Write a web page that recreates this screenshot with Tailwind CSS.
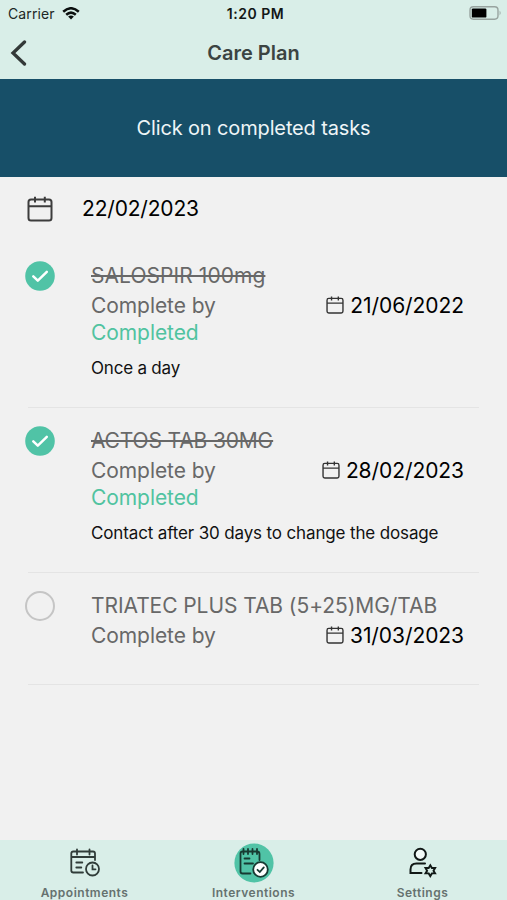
<!DOCTYPE html>
<html lang="en">
<head>
<meta charset="utf-8">
<title>Care Plan</title>
<script src="https://cdn.jsdelivr.net/npm/@tailwindcss/browser@4"></script>
</head>
<body class="bg-[#f1f1f1]">
<svg class="hidden">
  <symbol id="calendar" viewBox="0 0 26 26"><g fill="none" stroke="currentColor" stroke-width="2"><rect x="1.5" y="3.5" width="23" height="21" rx="2.5"/><path d="M1.5 10.3h23M8 .8v5.600M17.800 .8v5.600"/></g></symbol>
  <symbol id="done" viewBox="0 0 30 30"><circle cx="15" cy="15" r="14.8" fill="#50c3a6"/><path d="M8.300 15.300l4.500 4.300 9-8.800" fill="none" stroke="#fff" stroke-width="2.500" stroke-linecap="round" stroke-linejoin="round"/></symbol>
</svg>
<div class="flex h-[900px] w-[507px] flex-col bg-[#f1f1f1] font-['Inter','Liberation_Sans',sans-serif] text-black">
  <header class="h-[79px] shrink-0 bg-[#d9eee8]">
    <div class="grid h-7 grid-cols-3 items-center pl-2 pr-1">
      <div class="flex items-center gap-[7px] text-[14px] leading-7 tracking-[0.1px] text-[#202725]"><span>Carrier</span>
        <svg class="-mt-[2px] h-[13px] w-[18px]" viewBox="0 0 18 13" fill="none" stroke="#0b0f0e" stroke-width="2.500"><path d="M1.200 4.700Q9-2.200 16.800 4.700M4.200 7.800Q9 3.500 13.800 7.800"/><path d="M6.100 9.600Q9 7.200 11.900 9.600L9 12.600z" fill="#0b0f0e" stroke="none"/></svg>
      </div>
      <div class="text-center text-[14px] font-semibold leading-7 tracking-[0.5px] text-[#121716]">1:20 PM</div>
      <div class="-mt-[2px] flex justify-end"><svg class="h-[14px] w-[34px]" viewBox="0 0 34 14"><rect x="1" y=".8" width="28" height="12.400" rx="3.400" fill="none" stroke="#98a4a0" stroke-width="1.400"/><rect x="2.800" y="2.400" width="14.600" height="9.200" rx="1.200" fill="#000"/><path d="M30.600 4.600q2 2.400 0 4.800z" fill="#98a4a0"/></svg></div>
    </div>
    <div class="grid h-[49px] grid-cols-[60px_1fr_60px] items-center">
      <svg class="ml-[10px] h-[26px] w-[18px]" viewBox="0 0 18 26" fill="none" stroke="#333938" stroke-width="3.300" stroke-linecap="round" stroke-linejoin="miter"><path d="M14.500 2L3 13l11.500 11"/></svg>
      <h1 class="text-center text-[20px] font-semibold leading-6 text-[#3b4442]">Care Plan</h1>
    </div>
  </header>
  <div class="flex h-[98px] shrink-0 items-center justify-center bg-[#174f68] text-[20px] tracking-[-0.14px] text-[#eef5f7]">Click on completed tasks</div>
  <main class="flex-1">
    <div class="flex h-[66px] items-center pl-[27px]">
      <svg class="-mt-[2px] h-[26px] w-[26px] text-[#3c3c3c]"><use href="#calendar"/></svg>
      <span class="-mt-[2px] ml-[29px] text-[21px] tracking-[-0.18px]">22/02/2023</span>
    </div>

    <section class="mx-7 h-[165px] border-b border-[#e4e4e4] pt-[17.500px]">
      <div class="flex">
        <svg class="-ml-[3px] h-[30px] w-[30px] shrink-0"><use href="#done"/></svg>
        <div class="ml-9 mr-[15px] flex-1 whitespace-nowrap text-[21px] tracking-[-0.07px] text-[#686868]">
          <h2 class="h-[30px] leading-[30px] tracking-[0.06px]"><span class="line-through decoration-[1.5px]">SALOSPIR 100mg</span></h2>
          <div class="flex h-[30px] justify-between leading-[30px]"><span>Complete by</span><span class="flex items-center text-black"><svg class="-mt-[2px] mr-[6px] h-[18px] w-[18px] text-[#333]"><use href="#calendar"/></svg><span>21/06/2022</span></span></div>
          <p class="h-6 leading-6 text-[#50c3a0]">Completed</p>
          <p class="mt-[11px] h-6 text-[17px] leading-6 tracking-[-0.2px] text-[#111]">Once a day</p>
        </div>
      </div>
    </section>

    <section class="mx-7 h-[165px] border-b border-[#e4e4e4] pt-[18px]">
      <div class="flex">
        <svg class="-ml-[3px] h-[30px] w-[30px] shrink-0"><use href="#done"/></svg>
        <div class="ml-9 mr-[15px] flex-1 whitespace-nowrap text-[21px] tracking-[-0.07px] text-[#686868]">
          <h2 class="h-[30px] leading-[30px] tracking-[-0.15px]"><span class="line-through decoration-[1.5px]">ACTOS TAB 30MG</span></h2>
          <div class="flex h-[30px] justify-between leading-[30px]"><span>Complete by</span><span class="flex items-center text-black"><svg class="-mt-[2px] mr-[6px] h-[18px] w-[18px] text-[#333]"><use href="#calendar"/></svg><span>28/02/2023</span></span></div>
          <p class="h-6 leading-6 text-[#50c3a0]">Completed</p>
          <p class="mt-[11px] h-6 text-[17px] leading-6 tracking-[-0.14px] text-[#111]">Contact after 30 days to change the dosage</p>
        </div>
      </div>
    </section>

    <section class="mx-7 h-[112px] border-b border-[#e4e4e4] pt-[18px]">
      <div class="flex">
        <span class="-ml-[3px] h-[30px] w-[30px] shrink-0 rounded-full border-[2.5px] border-[#c5c5c5]"></span>
        <div class="ml-9 mr-[15px] flex-1 whitespace-nowrap text-[21px] tracking-[-0.07px] text-[#686868]">
          <h2 class="h-[30px] leading-[30px]">TRIATEC PLUS TAB (5+25)MG/TAB</h2>
          <div class="flex h-[30px] justify-between leading-[30px]"><span>Complete by</span><span class="flex items-center text-black"><svg class="-mt-[2px] mr-[6px] h-[18px] w-[18px] text-[#333]"><use href="#calendar"/></svg><span>31/03/2023</span></span></div>
        </div>
      </div>
    </section>
  </main>
  <nav class="grid h-[60px] shrink-0 grid-cols-3 bg-[#d9eee8] text-[12px] font-semibold tracking-[0.5px] text-[#66726f]">
    <a class="flex flex-col items-center pt-[3px]">
      <svg class="h-10 w-10" viewBox="0 0 40 40" fill="none" stroke="#303c39" stroke-width="1.800" stroke-linecap="round"><path d="M18 29.500H8.300Q6.300 29.500 6.300 27.500V10.500Q6.300 8.500 8.300 8.500H28Q30 8.500 30 10.500V17M6.300 14H30M12 6.500v5M24.500 6.500v5M11.300 19.500h6M11.300 24.500h5"/><circle cx="27.500" cy="26" r="6.500"/><path d="M27.500 22.500v3.800h3"/></svg>
      <span class="mt-px leading-[18px]">Appointments</span>
    </a>
    <a class="flex flex-col items-center pt-[3px]">
      <svg class="h-10 w-10" viewBox="0 0 40 40" fill="none" stroke="#173a32" stroke-width="1.800" stroke-linecap="round"><circle cx="20" cy="20" r="19.600" fill="#50c3a6" stroke="none"/><path d="M16.500 30.500H8.500Q6.500 30.500 6.500 28.500V10.500Q6.500 8.500 8.500 8.500H23Q25.500 8.500 25.500 11V17M9.500 6v5M14 6v5M18.500 6v5M23 6v5M10.500 15.500h5M10.500 20.500h8.500"/><circle cx="26.500" cy="26.500" r="7.300" fill="#fff"/><path d="M23.500 26.800l2.300 2.200 4-4.600"/></svg>
      <span class="mt-px leading-[18px]">Interventions</span>
    </a>
    <a class="flex flex-col items-center pt-[3px]">
      <svg class="h-10 w-10" viewBox="0 0 40 40" fill="none" stroke="#111816" stroke-width="2" stroke-linecap="round"><circle cx="17.300" cy="11.300" r="5.600" fill="#f3faf8"/><path d="M18.500 30H7.500V26.500Q7.500 20.500 13.500 20.500H22"/><path d="M27.300 22.300l1.600 2.700h3.200l-1.600 2.700 1.600 2.700h-3.200l-1.600 2.700-1.600-2.700H22.500l1.600-2.700L22.500 25h3.200z" stroke-width="1.900"/></svg>
      <span class="mt-px leading-[18px]">Settings</span>
    </a>
  </nav>
</div>
</body>
</html>
